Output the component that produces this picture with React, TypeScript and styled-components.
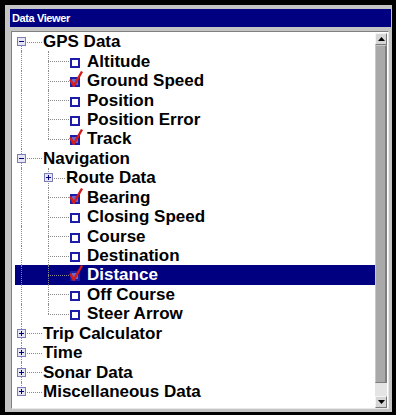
import React from 'react';
import styled, { createGlobalStyle, css } from 'styled-components';

const GlobalStyle = createGlobalStyle`
  html, body {
    margin: 0;
    padding: 0;
    background: #000;
  }
`;

const ROW_H = 19.45;

type VLine = 'full' | 'top' | 'bottom' | 'none';

interface Node {
  label: string;
  level: 0 | 1;
  expander?: 'plus' | 'minus';
  checked?: boolean;
  outer: VLine; // dotted line of the top level column
  inner?: VLine; // dotted line of the child column
  selected?: boolean;
}

const nodes: Node[] = [
  { label: 'GPS Data', level: 0, expander: 'minus', outer: 'bottom' },
  { label: 'Altitude', level: 1, checked: false, outer: 'full', inner: 'full' },
  { label: 'Ground Speed', level: 1, checked: true, outer: 'full', inner: 'full' },
  { label: 'Position', level: 1, checked: false, outer: 'full', inner: 'full' },
  { label: 'Position Error', level: 1, checked: false, outer: 'full', inner: 'full' },
  { label: 'Track', level: 1, checked: true, outer: 'full', inner: 'top' },
  { label: 'Navigation', level: 0, expander: 'minus', outer: 'full' },
  { label: 'Route Data', level: 1, expander: 'plus', outer: 'full', inner: 'full' },
  { label: 'Bearing', level: 1, checked: true, outer: 'full', inner: 'full' },
  { label: 'Closing Speed', level: 1, checked: false, outer: 'full', inner: 'full' },
  { label: 'Course', level: 1, checked: false, outer: 'full', inner: 'full' },
  { label: 'Destination', level: 1, checked: false, outer: 'full', inner: 'full' },
  { label: 'Distance', level: 1, checked: true, outer: 'full', inner: 'full', selected: true },
  { label: 'Off Course', level: 1, checked: false, outer: 'full', inner: 'full' },
  { label: 'Steer Arrow', level: 1, checked: false, outer: 'full', inner: 'top' },
  { label: 'Trip Calculator', level: 0, expander: 'plus', outer: 'full' },
  { label: 'Time', level: 0, expander: 'plus', outer: 'full' },
  { label: 'Sonar Data', level: 0, expander: 'plus', outer: 'full' },
  { label: 'Miscellaneous Data', level: 0, expander: 'plus', outer: 'top' },
];

const Frame = styled.div`
  width: 396px;
  height: 415px;
  box-sizing: border-box;
  padding: 5px 4px 3px 5px;
  background: #000;
`;

const Window = styled.div`
  height: 100%;
  box-sizing: border-box;
  padding: 4px 1px 3px 5px;
  background: #c4c4c4;
  display: flex;
  flex-direction: column;
  gap: 4px;
`;

const TitleBar = styled.div`
  height: 18px;
  flex: none;
  background: #000080;
  color: #fff;
  display: flex;
  align-items: center;
  padding-left: 2px;
  font-family: "Liberation Sans", Arial, sans-serif;
  font-weight: 700;
  font-size: 11px;
  letter-spacing: -0.4px;
`;

const Panel = styled.div`
  flex: 1;
  margin: 0 2px 0 1px;
  display: flex;
  background: #fff;
  border-top: 1px solid #808080;
  border-left: 1px solid #808080;
  border-right: 1px solid #e8e8e8;
  border-bottom: 1px solid #e8e8e8;
  overflow: hidden;
`;

const Tree = styled.div`
  flex: 1;
  display: flex;
  flex-direction: column;
  font-family: "Liberation Sans", Arial, sans-serif;
  font-weight: 700;
  font-size: 17px;
  color: #000;
`;

const Row = styled.div<{ $selected?: boolean }>`
  height: ${ROW_H}px;
  display: flex;
  align-items: center;
  white-space: nowrap;
  ${(p) =>
    p.$selected &&
    css`
      background: linear-gradient(to right, transparent 3px, #000080 3px);
      color: #fff;
    `}
`;

const dotted = '1px dotted #8a8a8a';

const Guide = styled.div<{ $w: number; $x: number; $v: VLine; $branch?: boolean }>`
  position: relative;
  flex: none;
  width: ${(p) => p.$w}px;
  height: 100%;
  display: flex;
  align-items: center;
  padding-left: ${(p) => p.$x - 4}px;
  box-sizing: border-box;

  &::before {
    content: '';
    position: absolute;
    left: ${(p) => p.$x}px;
    border-left: ${dotted};
    display: ${(p) => (p.$v === 'none' ? 'none' : 'block')};
    top: ${(p) => (p.$v === 'bottom' ? '50%' : '0')};
    bottom: ${(p) => (p.$v === 'top' ? '50%' : '0')};
  }

  &::after {
    content: '';
    position: absolute;
    display: ${(p) => (p.$branch ? 'block' : 'none')};
    left: ${(p) => p.$x}px;
    right: 1px;
    top: 50%;
    border-top: ${dotted};
  }
`;

const Expander = styled.div<{ $open: boolean }>`
  position: relative;
  z-index: 1;
  width: 9px;
  height: 9px;
  box-sizing: border-box;
  border: 1px solid #7c7cb8;
  background: #e6e6f4;

  &::before {
    content: '';
    position: absolute;
    left: 1px;
    right: 1px;
    top: 3px;
    height: 1px;
    background: #000080;
  }

  &::after {
    content: '';
    position: absolute;
    display: ${(p) => (p.$open ? 'none' : 'block')};
    top: 1px;
    bottom: 1px;
    left: 3px;
    width: 1px;
    background: #000080;
  }
`;

const CheckSlot = styled.div`
  flex: none;
  width: 10px;
  height: 10px;
  margin: 3px 7px 0 0;
  display: flex;
`;

const Label = styled.span`
  line-height: 1;
`;

const ScrollBar = styled.div`
  flex: none;
  width: 12px;
  margin-right: 1px;
  padding: 1px 0 0;
  display: flex;
  flex-direction: column;
`;

const ScrollButton = styled.div`
  flex: none;
  height: 12px;
  box-sizing: border-box;
  background: #d6d6d6;
  border-top: 1px solid #f4f4f4;
  border-left: 1px solid #f4f4f4;
  border-right: 1px solid #7a7a7a;
  border-bottom: 1px solid #7a7a7a;
  display: flex;
  align-items: center;
  justify-content: center;
`;

const Thumb = styled.div`
  flex: none;
  height: 338px;
  box-sizing: border-box;
  background: #a9a9a9;
  border-top: 1px solid #c8c8c8;
  border-left: 1px solid #c8c8c8;
  border-right: 2px solid #7e7e7e;
  border-bottom: 1px solid #7e7e7e;
`;

const Track = styled.div`
  flex: 1;
  background: #e4e4e4;
`;

const Arrow = ({ up }: { up?: boolean }) => (
  <svg width="7" height="4" viewBox="0 0 7 4">
    <polygon points={up ? '3.5,0 7,4 0,4' : '0,0 7,0 3.5,4'} fill="#000" />
  </svg>
);

const CheckBox = ({ checked }: { checked?: boolean }) => (
  <svg width="10" height="10" viewBox="0 0 10 10" style={{ overflow: 'visible' }}>
    <rect
      x="1"
      y="1"
      width="8"
      height="8"
      fill={checked ? '#6a6acc' : '#fff'}
      stroke="#1c1ca8"
      strokeWidth="2"
    />
    {checked && (
      <polyline
        points="0.2,2.5 3.8,8.8 12,-5.5"
        fill="none"
        stroke="#d41c1c"
        strokeWidth="2.4"
        strokeLinejoin="round"
      />
    )}
  </svg>
);

const TreeRow = ({ node }: { node: Node }) => {
  if (node.level === 0) {
    return (
      <Row $selected={node.selected}>
        <Guide $w={31} $x={9} $v={node.outer} $branch>
          <Expander $open={node.expander === 'minus'} />
        </Guide>
        <Label>{node.label}</Label>
      </Row>
    );
  }

  return (
    <Row $selected={node.selected}>
      <Guide $w={31} $x={9} $v={node.outer} />
      {node.expander ? (
        <Guide $w={23} $x={5} $v={node.inner ?? 'none'} $branch>
          <Expander $open={node.expander === 'minus'} />
        </Guide>
      ) : (
        <>
          <Guide $w={27} $x={5} $v={node.inner ?? 'none'} $branch />
          <CheckSlot>
            <CheckBox checked={node.checked} />
          </CheckSlot>
        </>
      )}
      <Label>{node.label}</Label>
    </Row>
  );
};

export default function App() {
  return (
    <>
      <GlobalStyle />
      <Frame>
        <Window>
          <TitleBar>Data Viewer</TitleBar>
          <Panel>
            <Tree>
              {nodes.map((n) => (
                <TreeRow key={n.label} node={n} />
              ))}
            </Tree>
            <ScrollBar>
              <ScrollButton>
                <Arrow up />
              </ScrollButton>
              <Thumb />
              <Track />
              <ScrollButton>
                <Arrow />
              </ScrollButton>
            </ScrollBar>
          </Panel>
        </Window>
      </Frame>
    </>
  );
}
